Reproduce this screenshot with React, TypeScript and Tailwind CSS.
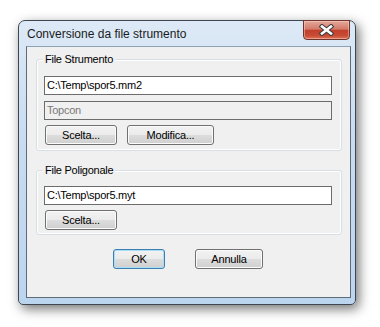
import React from "react";

type BtnProps = {
  label: string;
  width: string;
  primary?: boolean;
  className?: string;
};

function Bottone({ label, width, primary, className }: BtnProps) {
  const bordo = primary
    ? "border-[#3c7fb1] shadow-[inset_0_0_0_1px_#a9def7]"
    : "border-[#707070] shadow-[inset_0_0_0_1px_#fbfbfb]";
  return (
    <button
      className={`${width} ${bordo} ${className ?? ""} h-[20px] rounded-[3px] border bg-[linear-gradient(#f2f2f2_0%,#ebebeb_50%,#dddddd_50%,#cfcfcf_100%)] text-[11px] leading-[18px] tracking-[-0.2px] text-black`}
    >
      {label}
    </button>
  );
}

function Campo({ value, disabled }: { value: string; disabled?: boolean }) {
  return (
    <div
      className={`flex h-[19px] w-[288px] items-center border border-[#6c6c6c] px-[2px] text-[11px] tracking-[-0.25px] ${
        disabled ? "bg-[#f0f0f0] text-[#7a7a7a]" : "bg-white text-black"
      }`}
    >
      {value}
    </div>
  );
}

function Gruppo({ titolo, children, className }: { titolo: string; children: React.ReactNode; className: string }) {
  return (
    <div className={`relative ml-[9px] w-[306px] rounded-[3px] border border-[#d5dfe5] shadow-[inset_0_0_0_1px_#ffffff] ${className}`}>
      {/* etichetta sopra il bordo */}
      <span className="absolute left-[6px] top-[-8px] bg-[#f0f0f0] px-[2px] text-[11px] leading-[14px] tracking-[-0.25px] text-black">
        {titolo}
      </span>
      {children}
    </div>
  );
}

export default function App() {
  return (
    <div className="h-[327px] w-[380px] overflow-hidden bg-white pl-[18px] pt-[20px] font-['Liberation_Sans',Arial,sans-serif]">
      {/* finestra */}
      <div className="h-[285px] w-[338px] rounded-t-[7px] rounded-b-[5px] border border-[#3e4650] bg-[linear-gradient(#dde9f6,#c9dcf1_40%,#bcd5ef)] shadow-[3px_4px_12px_rgba(0,0,0,0.55)]">
        {/* barra del titolo */}
        <div className="flex h-[25px] items-start">
          <span className="self-center pl-[8px] text-[12px] leading-[14px] text-[#1b1b1b]">
            Conversione da file strumento
          </span>
          <div className="-mt-[1px] ml-auto mr-[5px] flex h-[20px] w-[47px] items-center justify-center rounded-b-[4px] border border-[#70342b] bg-[linear-gradient(#e4a89b_0%,#d47a69_45%,#c2402c_52%,#c84b34_80%,#dc7256_100%)] shadow-[inset_0_0_0_1px_rgba(255,220,210,0.45)]">
            <svg width="15" height="12" viewBox="0 0 15 12">
              <path d="M3 2.5 L12 9.5 M12 2.5 L3 9.5" stroke="#3a3a3a" strokeWidth="4.6" strokeLinecap="square" />
              <path d="M3 2.5 L12 9.5 M12 2.5 L3 9.5" stroke="#ffffff" strokeWidth="2.6" strokeLinecap="square" />
            </svg>
          </div>
        </div>

        {/* area client */}
        <div className="ml-[7px] h-[252px] w-[325px] border border-[#5d6b79] border-t-[#8ea2b6] bg-[#f0f0f0]">
          <Gruppo titolo="File Strumento" className="mt-[12px] h-[92px] pl-[7px] pt-[16px]">
            <Campo value="C:\Temp\spor5.mm2" />
            <div className="mt-[6px]">
              <Campo value="Topcon" disabled />
            </div>
            <div className="mt-[5px] ml-[1px] flex gap-[10px]">
              <Bottone label="Scelta..." width="w-[72px]" />
              <Bottone label="Modifica..." width="w-[87px]" />
            </div>
          </Gruppo>

          <Gruppo titolo="File Poligonale" className="mt-[19px] h-[65px] pl-[7px] pt-[15px]">
            <Campo value="C:\Temp\spor5.myt" />
            <div className="mt-[5px] ml-[1px] flex">
              <Bottone label="Scelta..." width="w-[72px]" />
            </div>
          </Gruppo>

          {/* pulsanti finali */}
          <div className="mt-[14px] ml-[86px] flex gap-[30px]">
            <Bottone label="OK" width="w-[52px]" primary />
            <Bottone label="Annulla" width="w-[68px]" />
          </div>
        </div>
      </div>
    </div>
  );
}
